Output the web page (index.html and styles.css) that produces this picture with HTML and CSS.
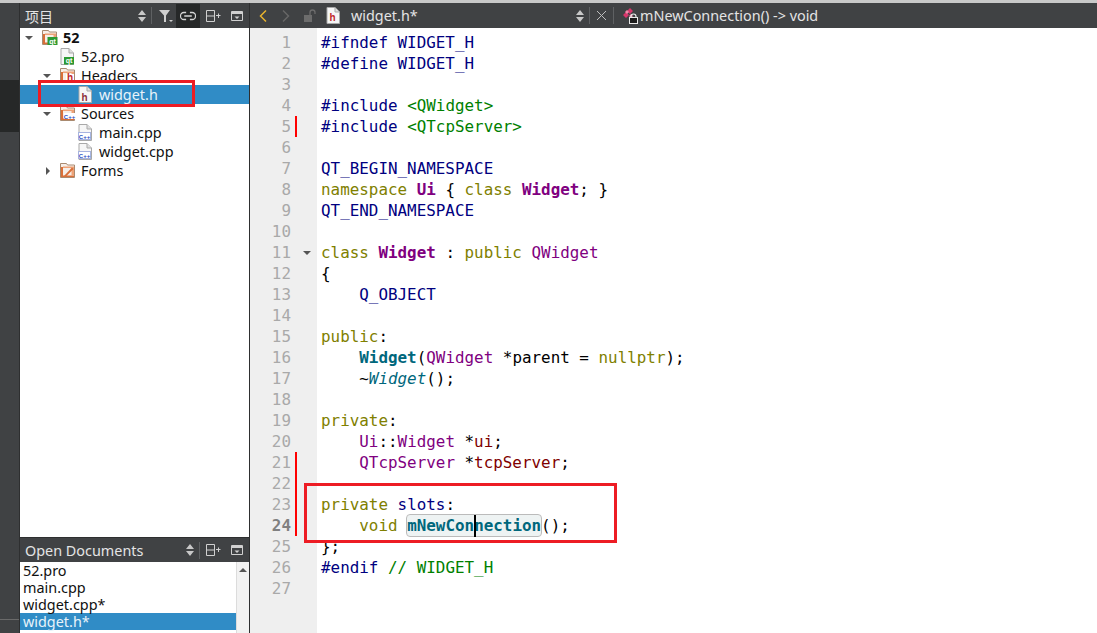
FILE: index.html
```html
<!DOCTYPE html>
<html lang="zh">
<head>
    <meta charset="UTF-8">
    <title>widget.h - Qt Creator</title>
    <link rel="stylesheet" href="styles.css">
</head>
<body>

<svg class="defs" xmlns="http://www.w3.org/2000/svg">
    <symbol id="updown" viewBox="0 0 10 14">
        <path d="M5 1l4 5H1zM5 13L1 8h8z" fill="#c8c8c8"/>
    </symbol>
    <symbol id="split" viewBox="0 0 16 14">
        <path d="M.5 1.500h8v11h-8zM.5 7h8" fill="none" stroke="#d0d0d0"/>
        <path d="M10 6.500h4.500M12.500 4.500v4.500" fill="none" stroke="#d0d0d0"/>
    </symbol>
    <symbol id="closepane" viewBox="0 0 12 12">
        <path d="M.5 1.500h11v9H.5z" fill="none" stroke="#d0d0d0"/>
        <path d="M1 2h10v2H1z" fill="#d0d0d0"/>
        <path d="M3.500 6.500h5L6 9z" fill="#d0d0d0"/>
    </symbol>
    <symbol id="folder" viewBox="0 0 17 17">
        <path d="M1.500 1.500h6l1 1.500h7v12.500h-14z" fill="#f6eee8" stroke="#a98a70"/>
        <path d="M2 5h2v10H2zM4 13.500h11v1.500H4z" fill="#d96f38"/>
        <path d="M4 4.500h11V6H4zM12.500 6H15v7.500h-2.500z" fill="#eea277"/>
    </symbol>
    <symbol id="page" viewBox="0 0 16 17">
        <path d="M1.500 .5h8l4.500 4.500v11.500h-12.500z" fill="#f6f6f6" stroke="#a9a9a9"/>
        <path d="M9.500 .5v4.500h4.500" fill="#e0e0e0" stroke="#a9a9a9"/>
    </symbol>
    <symbol id="method" viewBox="0 0 17 17">
        <path d="M1 8l3-3 3 3-3 3zM5 4l3-3 3 3-3 3z" fill="#d8356b"/>
        <path d="M3 5l2-2 2 2-2 2zM7 9l2-2 2 2-2 2z" fill="#ef86a8"/>
        <path d="M9 9.500a2.500 2.500 0 0 1 5 0V11h-5z" fill="none" stroke="#e8e8e8" stroke-width="1.200"/>
        <rect x="7.500" y="10.500" width="8" height="6" fill="#1c1c1c" stroke="#e8e8e8"/>
    </symbol>
</svg>

<div class="top-line"></div>

<div class="main">
    <div class="mode-bar">
        <div class="mode-gap-top"></div>
        <div class="mode-active"></div>
        <div class="mode-rule"></div>
    </div>

    <div class="side">
        <div class="pane-head">
            <span class="pane-title cjk">项目</span>
            <svg class="ico-updown"><use href="#updown"/></svg>
            <span class="sep"></span>
            <svg class="ico-filter" viewBox="0 0 16 14">
                <path d="M1 1h11L8 6.500V13H6V6.500z" fill="#d0d0d0"/>
                <path d="M11 11h4l-2 2z" fill="#d0d0d0"/>
            </svg>
            <span class="tool-on">
                <svg class="ico-link" viewBox="0 0 16 10">
                    <path d="M6 1.500H3.500a3.500 3.500 0 0 0 0 7H6M10 1.500h2.500a3.500 3.500 0 0 1 0 7H10M4 5h8" transform="translate(0.500 0) scale(.94 1)" fill="none" stroke="#d4d4d4" stroke-width="1.300"/>
                </svg>
            </span>
            <svg class="ico-split"><use href="#split"/></svg>
            <svg class="ico-close"><use href="#closepane"/></svg>
        </div>

        <div class="tree">
            <div class="row d0">
                <span class="arrow-down"></span>
                <svg class="ico"><use href="#folder"/></svg>
                <svg class="badge-svg" viewBox="0 0 17 17"><rect x="6.500" y="8" width="10" height="8" fill="#2c9a32"/><text x="11.500" y="14.500" class="badge-qt">qt</text></svg>
                <b class="label">52</b>
            </div>
            <div class="row d1">
                <span class="arrow-none"></span>
                <svg class="ico"><use href="#page"/></svg>
                <svg class="badge-svg" viewBox="0 0 17 17"><rect x="5" y="9" width="10" height="7.500" fill="#2c9a32"/><text x="10" y="15" class="badge-qt">qt</text></svg>
                <span class="label">52.pro</span>
            </div>
            <div class="row d1">
                <span class="arrow-down"></span>
                <svg class="ico"><use href="#folder"/></svg>
                <svg class="badge-svg" viewBox="0 0 17 17"><rect x="7" y="7" width="8" height="6.500" fill="#fff"/><text x="11" y="14" class="badge-h">h</text></svg>
                <span class="label">Headers</span>
            </div>
            <div class="row d2 selected">
                <span class="arrow-none"></span>
                <svg class="ico"><use href="#page"/></svg>
                <svg class="badge-svg" viewBox="0 0 17 17"><text x="7.500" y="14.500" class="badge-h dim">h</text></svg>
                <span class="label">widget.h</span>
            </div>
            <div class="row d1">
                <span class="arrow-down"></span>
                <svg class="ico"><use href="#folder"/></svg>
                <svg class="badge-svg" viewBox="0 0 17 17"><rect x="5" y="8" width="11" height="6" fill="#fff"/><text x="10.500" y="13.500" class="badge-c">C++</text></svg>
                <span class="label">Sources</span>
            </div>
            <div class="row d2">
                <span class="arrow-none"></span>
                <svg class="ico"><use href="#page"/></svg>
                <svg class="badge-svg" viewBox="0 0 17 17"><rect x="1.500" y="8.500" width="12" height="7" fill="#fff" stroke="#a7b4e0"/><text x="7.500" y="14.500" class="badge-c">C++</text></svg>
                <span class="label">main.cpp</span>
            </div>
            <div class="row d2">
                <span class="arrow-none"></span>
                <svg class="ico"><use href="#page"/></svg>
                <svg class="badge-svg" viewBox="0 0 17 17"><rect x="1.500" y="8.500" width="12" height="7" fill="#fff" stroke="#a7b4e0"/><text x="7.500" y="14.500" class="badge-c">C++</text></svg>
                <span class="label">widget.cpp</span>
            </div>
            <div class="row d1">
                <span class="arrow-right"></span>
                <svg class="ico"><use href="#folder"/></svg>
                <svg class="badge-svg" viewBox="0 0 17 17"><path d="M5 14L13 5.500l1.500 1.500-8 8H5z" fill="#d96f38"/></svg>
                <span class="label">Forms</span>
            </div>
        </div>

        <div class="pane-head docs-head">
            <span class="pane-title">Open Documents</span>
            <svg class="ico-updown"><use href="#updown"/></svg>
            <span class="sep"></span>
            <svg class="ico-split"><use href="#split"/></svg>
            <svg class="ico-close"><use href="#closepane"/></svg>
        </div>
        <div class="docs">
            <div class="doc-list">
                <div class="doc">52.pro</div>
                <div class="doc">main.cpp</div>
                <div class="doc">widget.cpp*</div>
                <div class="doc selected">widget.h*</div>
            </div>
            <div class="scrollbar"><span class="scroll-up"></span></div>
        </div>
    </div>

    <div class="editor">
        <div class="edit-bar">
            <svg class="nav" viewBox="0 0 10 14"><path d="M8 1.500L2.500 7 8 12.500" fill="none" stroke="#e8b32e" stroke-width="1.500"/></svg>
            <svg class="nav nav-fwd" viewBox="0 0 10 14"><path d="M2 1.500L7.500 7 2 12.500" fill="none" stroke="#666" stroke-width="1.500"/></svg>
            <svg class="lock" viewBox="0 0 14 14">
                <path d="M7 6V3.500a2.500 2.500 0 0 1 5 0V5" fill="none" stroke="#6c6c6c" stroke-width="1.300"/>
                <rect x="1" y="6" width="8" height="7" fill="#6c6c6c"/>
            </svg>
            <svg class="ico file-ico"><use href="#page"/><text x="7.500" y="14" class="badge-h">h</text></svg>
            <span class="file-name">widget.h*</span>
            <svg class="ico-updown"><use href="#updown"/></svg>
            <span class="sep"></span>
            <svg class="ico-x" viewBox="0 0 11 11"><path d="M1 1l9 9M10 1l-9 9" stroke="#bdbdbd" fill="none"/></svg>
            <span class="sep"></span>
            <svg class="ico method-ico"><use href="#method"/></svg>
            <span class="symbol-name">mNewConnection() -&gt; void</span>
        </div>

        <div class="edit-body">
            <div class="gutter">
                <div class="gl"><span class="num">1</span><span class="mark"></span></div>
                <div class="gl"><span class="num">2</span><span class="mark"></span></div>
                <div class="gl"><span class="num">3</span><span class="mark"></span></div>
                <div class="gl"><span class="num">4</span><span class="mark"></span></div>
                <div class="gl"><span class="num">5</span><span class="mark on"></span></div>
                <div class="gl"><span class="num">6</span><span class="mark"></span></div>
                <div class="gl"><span class="num">7</span><span class="mark"></span></div>
                <div class="gl"><span class="num">8</span><span class="mark"></span></div>
                <div class="gl"><span class="num">9</span><span class="mark"></span></div>
                <div class="gl"><span class="num">10</span><span class="mark"></span></div>
                <div class="gl"><span class="num">11</span><span class="mark"></span><span class="fold"></span></div>
                <div class="gl"><span class="num">12</span><span class="mark"></span></div>
                <div class="gl"><span class="num">13</span><span class="mark"></span></div>
                <div class="gl"><span class="num">14</span><span class="mark"></span></div>
                <div class="gl"><span class="num">15</span><span class="mark"></span></div>
                <div class="gl"><span class="num">16</span><span class="mark"></span></div>
                <div class="gl"><span class="num">17</span><span class="mark"></span></div>
                <div class="gl"><span class="num">18</span><span class="mark"></span></div>
                <div class="gl"><span class="num">19</span><span class="mark"></span></div>
                <div class="gl"><span class="num">20</span><span class="mark"></span></div>
                <div class="gl"><span class="num">21</span><span class="mark on"></span></div>
                <div class="gl"><span class="num">22</span><span class="mark on"></span></div>
                <div class="gl"><span class="num">23</span><span class="mark on"></span></div>
                <div class="gl"><span class="num cur">24</span><span class="mark on"></span></div>
                <div class="gl"><span class="num">25</span><span class="mark"></span></div>
                <div class="gl"><span class="num">26</span><span class="mark"></span></div>
                <div class="gl"><span class="num">27</span><span class="mark"></span></div>
            </div>
            <div class="code">
                <div class="cl"><span class="pp">#ifndef WIDGET_H</span></div>
                <div class="cl"><span class="pp">#define WIDGET_H</span></div>
                <div class="cl"></div>
                <div class="cl"><span class="pp">#include</span> <span class="str">&lt;QWidget&gt;</span></div>
                <div class="cl"><span class="pp">#include</span> <span class="str">&lt;QTcpServer&gt;</span></div>
                <div class="cl"></div>
                <div class="cl"><span class="pp">QT_BEGIN_NAMESPACE</span></div>
                <div class="cl"><span class="kw">namespace</span> <b class="ty">Ui</b> { <span class="kw">class</span> <b class="ty">Widget</b>; }</div>
                <div class="cl"><span class="pp">QT_END_NAMESPACE</span></div>
                <div class="cl"></div>
                <div class="cl"><span class="kw">class</span> <b class="ty">Widget</b> : <span class="kw">public</span> <span class="ty">QWidget</span></div>
                <div class="cl">{</div>
                <div class="cl">    <span class="pp">Q_OBJECT</span></div>
                <div class="cl"></div>
                <div class="cl"><span class="kw">public</span>:</div>
                <div class="cl">    <b class="fn">Widget</b>(<span class="ty">QWidget</span> *parent = <span class="kw">nullptr</span>);</div>
                <div class="cl">    ~<i class="fn">Widget</i>();</div>
                <div class="cl"></div>
                <div class="cl"><span class="kw">private</span>:</div>
                <div class="cl">    <span class="ty">Ui</span>::<span class="ty">Widget</span> *<span class="mem">ui</span>;</div>
                <div class="cl">    <span class="ty">QTcpServer</span> *<span class="mem">tcpServer</span>;</div>
                <div class="cl"></div>
                <div class="cl"><span class="kw">private</span> <span class="pp">slots</span>:</div>
                <div class="cl">    <span class="kw">void</span> <b class="fn use">mNewCon<span class="cursor"></span>nection</b>();</div>
                <div class="cl">};</div>
                <div class="cl"><span class="pp">#endif</span> <span class="str">// WIDGET_H</span></div>
                <div class="cl"></div>
            </div>
        </div>
    </div>

    <!-- red boxes drawn on the screenshot -->
    <div class="note note-file"></div>
    <div class="note note-slots"></div>
</div>

</body>
</html>
```

FILE: styles.css
```css
html, body {
    margin: 0;
    padding: 0;
    height: 100%;
    overflow: hidden;
    background: #fff;
    font-family: "Noto Sans", "Noto Sans CJK SC", sans-serif;
    color: #111;
}

.defs {
    position: absolute;
    width: 0;
    height: 0;
}

.top-line {
    height: 3px;
    background: #c9c9c9;
}

.main {
    position: relative;
    display: flex;
    height: 630px;
}

/* left mode bar */
.mode-bar {
    width: 19px;
    background: #404244;
    border-right: 1px solid #2e2f30;
    display: flex;
    flex-direction: column;
}

.mode-gap-top {
    height: 77px;
}

.mode-active {
    height: 52px;
    background: #262828;
}

.mode-rule {
    height: 1px;
    margin-top: 487px;
    background: #6a6a6a;
}

/* project pane */
.side {
    width: 229px;
    border-right: 1px solid #2e2f30;
    display: flex;
    flex-direction: column;
}

.pane-head {
    height: 25px;
    flex-shrink: 0;
    background: #404244;
    display: flex;
    align-items: center;
    padding-left: 5px;
    color: #e4e4e4;
    font-size: 14.4px;
}

.pane-title {
    flex: 1;
}

.cjk {
    font-size: 14px;
    font-family: "Noto Sans CJK SC", sans-serif;
}

.ico-updown {
    width: 10px;
    height: 14px;
}

.sep {
    width: 1px;
    height: 17px;
    background: #5f6163;
    margin-left: 4px;
}

.ico-filter {
    width: 16px;
    height: 14px;
    margin-left: 6px;
}

.tool-on {
    width: 24px;
    height: 24px;
    margin-left: 2px;
    background: #262828;
    display: flex;
    align-items: center;
    justify-content: center;
}

.ico-link {
    width: 16px;
    height: 10px;
}

.ico-split {
    width: 16px;
    height: 14px;
    margin-left: 6px;
}

.ico-close {
    width: 12px;
    height: 12px;
    margin-left: 9px;
    margin-right: 6px;
}

.tree {
    flex: 1;
    background: #fff;
    font-size: 14.4px;
}

.row {
    position: relative;
    display: flex;
    align-items: center;
    height: 19px;
}

.row.selected {
    background: #308cc6;
    color: #e8f3fa;
}

.d1 {
    padding-left: 18px;
}

.d2 {
    padding-left: 36px;
}

.arrow-none,
.arrow-down,
.arrow-right {
    width: 21px;
    flex-shrink: 0;
    position: relative;
}

.arrow-down::before {
    content: "";
    position: absolute;
    left: 5px;
    top: -2px;
    border-left: 4px solid transparent;
    border-right: 4px solid transparent;
    border-top: 4px solid #555;
}

.arrow-right::before {
    content: "";
    position: absolute;
    left: 8px;
    top: -4px;
    border-top: 4px solid transparent;
    border-bottom: 4px solid transparent;
    border-left: 4px solid #555;
}

.ico {
    width: 17px;
    height: 17px;
    flex-shrink: 0;
}

.badge-svg {
    width: 17px;
    height: 17px;
    margin-left: -17px;
    flex-shrink: 0;
}

.badge-qt {
    fill: #fff;
    font: bold 7px "Liberation Sans", sans-serif;
    text-anchor: middle;
}

.badge-h {
    fill: #c0282d;
    font: bold 10px "Liberation Sans", sans-serif;
    text-anchor: middle;
}

.badge-h.dim {
    fill: #8c2f3c;
}

.badge-c {
    fill: #2b4fc2;
    font: bold 6px "Liberation Sans", sans-serif;
    text-anchor: middle;
}

.label {
    margin-left: 5px;
}

/* open documents */
.docs-head {
    border-top: 1px solid #2e2f30;
    height: 24px;
}

.docs {
    display: flex;
    height: 71px;
    background: #fff;
    font-size: 14.4px;
}

.doc-list {
    flex: 1;
}

.doc {
    height: 17px;
    line-height: 17px;
    padding-left: 3px;
}

.doc.selected {
    background: #308cc6;
    color: #e8f3fa;
}

.scrollbar {
    width: 13px;
    background: #f2f2f2;
    border-left: 1px solid #dcdcdc;
    display: flex;
    justify-content: center;
    padding-top: 6px;
    box-sizing: border-box;
}

.scroll-up {
    width: 0;
    height: 0;
    border-left: 4px solid transparent;
    border-right: 4px solid transparent;
    border-bottom: 4px solid #555;
}

/* editor */
.editor {
    flex: 1;
    display: flex;
    flex-direction: column;
    min-width: 0;
}

.edit-bar {
    height: 25px;
    flex-shrink: 0;
    background: #404244;
    display: flex;
    align-items: center;
    color: #e4e4e4;
    font-size: 14.4px;
}

.nav {
    width: 10px;
    height: 14px;
    margin-left: 8px;
}

.nav-fwd {
    margin-left: 13px;
}

.lock {
    width: 14px;
    height: 14px;
    margin-left: 12px;
}

.file-ico {
    margin-left: 8px;
}

.file-name {
    margin-left: 9px;
    width: 224px;
}

.ico-x {
    width: 11px;
    height: 11px;
    margin-left: 6px;
}

.ico-x + .sep {
    margin-left: 6px;
}

.method-ico {
    margin-left: 8px;
}

.symbol-name {
    margin-left: 1px;
}

.edit-body {
    flex: 1;
    display: flex;
    min-height: 0;
    font-family: "DejaVu Sans Mono", monospace;
    font-size: 15.9px;
}

.gutter {
    width: 67px;
    padding-top: 4px;
    background: #efefef;
}

.gl {
    display: flex;
    align-items: center;
    height: 21px;
}

.num {
    width: 41px;
    text-align: right;
    color: #a9a9a9;
}

.num.cur {
    color: #808080;
    font-weight: bold;
}

.mark {
    width: 2px;
    height: 21px;
    margin-left: 4px;
}

.mark.on {
    background: #f00;
}

.fold {
    margin-left: 6px;
    border-left: 4px solid transparent;
    border-right: 4px solid transparent;
    border-top: 4px solid #555;
}

.code {
    flex: 1;
    padding: 4px 0 0 4px;
    color: #000;
}

.cl {
    height: 21px;
    line-height: 21px;
    white-space: pre;
}

.pp {
    color: #000080;
}

.kw {
    color: #808000;
}

.str {
    color: #008000;
}

.ty {
    color: #800080;
}

.mem {
    color: #800000;
}

.fn {
    color: #00677c;
}

.use {
    display: inline-block;
    height: 21px;
    background: #eef3f3;
    outline: 1px solid #bbb;
    border-radius: 3px;
}

.cursor {
    position: absolute;
    width: 2px;
    height: 22px;
    background: #000;
}

/* red boxes */
.note {
    position: absolute;
    border: 3px solid #ed1c24;
    box-sizing: border-box;
}

.note-file {
    left: 38px;
    top: 77px;
    width: 157px;
    height: 27px;
}

.note-slots {
    left: 304px;
    top: 480px;
    width: 313px;
    height: 60px;
}
```
